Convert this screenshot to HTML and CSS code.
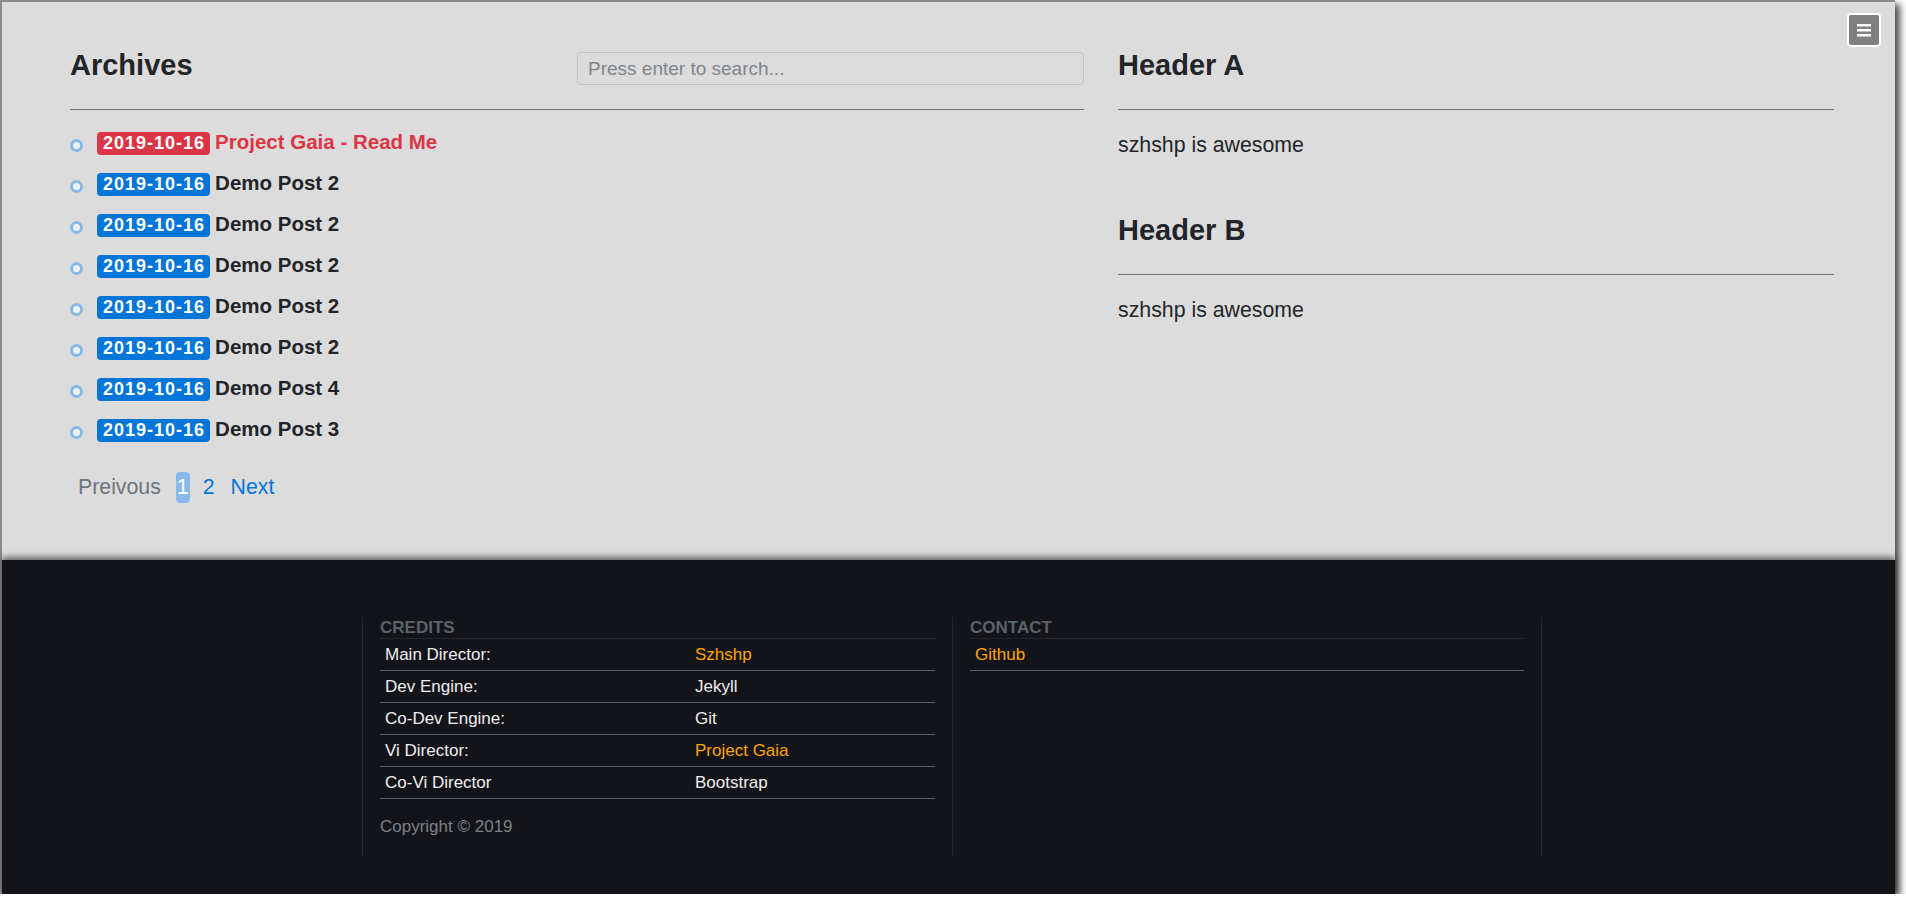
FILE: index.html
```html
<!DOCTYPE html>
<html lang="en">
<head>
<meta charset="utf-8">
<title>Archives</title>
<link rel="stylesheet" href="styles.css">
</head>
<body>
<div class="window">
  <main class="main">
    <button class="menu-btn" type="button" aria-label="Menu">
      <svg width="14" height="13" viewBox="0 0 14 13"><rect x="0" y="0" width="14" height="2.5" fill="#fff"/><rect x="0" y="5" width="14" height="2.5" fill="#fff"/><rect x="0" y="10" width="14" height="2.5" fill="#fff"/></svg>
    </button>
    <div class="layout">
      <section class="archives">
        <div class="archives-head">
          <h3 class="title">Archives</h3>
          <input class="search" type="text" placeholder="Press enter to search...">
        </div>
        <hr class="rule">
        <ul class="posts">
          <li class="post"><span class="dot"></span><span class="badge badge-red">2019-10-16</span><a class="post-title post-title-red" href="#">Project Gaia - Read Me</a></li>
          <li class="post"><span class="dot"></span><span class="badge">2019-10-16</span><a class="post-title" href="#">Demo Post 2</a></li>
          <li class="post"><span class="dot"></span><span class="badge">2019-10-16</span><a class="post-title" href="#">Demo Post 2</a></li>
          <li class="post"><span class="dot"></span><span class="badge">2019-10-16</span><a class="post-title" href="#">Demo Post 2</a></li>
          <li class="post"><span class="dot"></span><span class="badge">2019-10-16</span><a class="post-title" href="#">Demo Post 2</a></li>
          <li class="post"><span class="dot"></span><span class="badge">2019-10-16</span><a class="post-title" href="#">Demo Post 2</a></li>
          <li class="post"><span class="dot"></span><span class="badge">2019-10-16</span><a class="post-title" href="#">Demo Post 4</a></li>
          <li class="post"><span class="dot"></span><span class="badge">2019-10-16</span><a class="post-title" href="#">Demo Post 3</a></li>
        </ul>
        <nav class="pager">
          <span class="page page-disabled">Preivous</span>
          <span class="page page-active">1</span>
          <a class="page" href="#">2</a>
          <a class="page page-next" href="#">Next</a>
        </nav>
      </section>
      <aside class="sidebar">
        <h3 class="title">Header A</h3>
        <hr class="rule">
        <p class="side-text">szhshp is awesome</p>
        <h3 class="title title-b">Header B</h3>
        <hr class="rule">
        <p class="side-text">szhshp is awesome</p>
      </aside>
    </div>
  </main>
  <footer class="footer">
    <div class="footer-inner">
      <div class="fcol">
        <div class="fhead">CREDITS</div>
        <div class="frow"><span class="fcell fcell-key">Main Director:</span><span class="fcell"><a class="flink" href="#">Szhshp</a></span></div>
        <div class="frow"><span class="fcell fcell-key">Dev Engine:</span><span class="fcell">Jekyll</span></div>
        <div class="frow"><span class="fcell fcell-key">Co-Dev Engine:</span><span class="fcell">Git</span></div>
        <div class="frow"><span class="fcell fcell-key">Vi Director:</span><span class="fcell"><a class="flink" href="#">Project Gaia</a></span></div>
        <div class="frow"><span class="fcell fcell-key">Co-Vi Director</span><span class="fcell">Bootstrap</span></div>
        <div class="copyright">Copyright © 2019</div>
      </div>
      <div class="fcol fcol-last">
        <div class="fhead">CONTACT</div>
        <div class="frow"><span class="fcell"><a class="flink" href="#">Github</a></span></div>
      </div>
    </div>
  </footer>
</div>
</body>
</html>
```
FILE: styles.css
```css
html, body {
  margin: 0;
  padding: 0;
  background: #ffffff;
  overflow: hidden;
}

body {
  font-family: "Liberation Sans", Arial, sans-serif;
  color: #212529;
}

.window {
  width: 1893px;
  height: 892px;
  border-top: 2px solid #8b8b8b;
  border-left: 2px solid #8b8b8b;
  display: flex;
  flex-direction: column;
  box-shadow: 5px 4px 7px rgba(0, 0, 0, 0.7);
  position: relative;
}

.main {
  flex: 1;
  background: #dcdcdc;
  position: relative;
  padding: 46px 0 0 68px;
  box-sizing: border-box;
}

.menu-btn {
  position: absolute;
  top: 11px;
  right: 14px;
  width: 34px;
  height: 34px;
  box-sizing: border-box;
  background: #808080;
  border: 2px solid #ffffff;
  border-radius: 4px;
  display: flex;
  align-items: center;
  justify-content: center;
  padding: 0;
}

.layout {
  display: grid;
  grid-template-columns: 1014px 716px;
  column-gap: 34px;
}

.archives-head {
  display: grid;
  grid-template-columns: 1fr 1fr;
  height: 34px;
}

.title {
  margin: 0;
  font-size: 29px;
  line-height: 34px;
  font-weight: 700;
  color: #212529;
}

.search {
  margin: 4px 0 0;
  height: 33px;
  width: 100%;
  box-sizing: border-box;
  border: 1px solid #c4c4c4;
  border-radius: 4px;
  background: transparent;
  padding: 0 10px;
  font: 19px "Liberation Sans", Arial, sans-serif;
  color: #495057;
  outline: none;
}

.search::placeholder {
  color: #7e858c;
  opacity: 1;
}

.rule {
  margin: 27px 0 0;
  border: 0;
  border-top: 1px solid #6c737a;
  height: 0;
}

.posts {
  list-style: none;
  margin: 11px 0 0;
  padding: 0;
}

.post {
  height: 41px;
  line-height: 41px;
  font-size: 20.5px;
  font-weight: 700;
  white-space: nowrap;
}

.dot {
  display: inline-block;
  width: 13px;
  height: 13px;
  box-sizing: border-box;
  border: 3px solid #88b8e8;
  background: #eef2f6;
  border-radius: 50%;
  vertical-align: -3px;
  margin-right: 14px;
}

.badge {
  display: inline-block;
  line-height: 23px;
  padding: 0 5px 0 6px;
  font-size: 18px;
  letter-spacing: 1px;
  color: #ffffff;
  background: #0275d8;
  border-radius: 4px;
  margin-right: 5px;
}

.badge-red {
  background: #dc3545;
}

.post-title {
  color: #212529;
  text-decoration: none;
}

.post-title-red {
  color: #dc3545;
}

.pager {
  display: flex;
  gap: 12px;
  margin-top: 23px;
  padding-left: 7px;
  font-size: 21.3px;
  line-height: 23px;
}

.page {
  padding: 4px 1px;
  color: #0275d8;
  border-radius: 4px;
  text-decoration: none;
}

.page-disabled {
  color: #6c757d;
  margin-right: 2px;
}

.page-active {
  background: #87b9ea;
  color: #ffffff;
}

.page-next {
  margin-left: 2px;
}

.side-text {
  margin: 19px 0 0;
  font-size: 21.3px;
  line-height: 32px;
  color: #212529;
}

.title-b {
  margin-top: 52px;
}

.footer {
  position: relative;
  background: #131419;
  box-shadow: 0 -3px 6px rgba(0, 0, 0, 0.55);
  padding: 57px 0 38px 360px;
}

.footer-inner {
  display: flex;
}

.fcol {
  width: 590px;
  box-sizing: border-box;
  border-left: 1px solid #24262b;
  padding: 0 17px 17px;
}

.fcol-last {
  border-right: 1px solid #24262b;
}

.fhead {
  font-size: 17px;
  font-weight: 700;
  line-height: 21px;
  color: #5b626a;
  border-bottom: 1px solid #27292e;
}

.frow {
  display: flex;
  height: 32px;
  box-sizing: border-box;
  border-bottom: 1px solid #5a5f66;
  line-height: 31px;
  font-size: 17px;
  color: #eeeeee;
}

.fcell {
  padding: 0 5px;
}

.fcell-key {
  width: 310px;
  box-sizing: border-box;
}

.flink {
  color: #ffa500;
  text-decoration: none;
}

.copyright {
  margin-top: 16px;
  line-height: 24px;
  font-size: 17px;
  color: #7b8188;
}
```
